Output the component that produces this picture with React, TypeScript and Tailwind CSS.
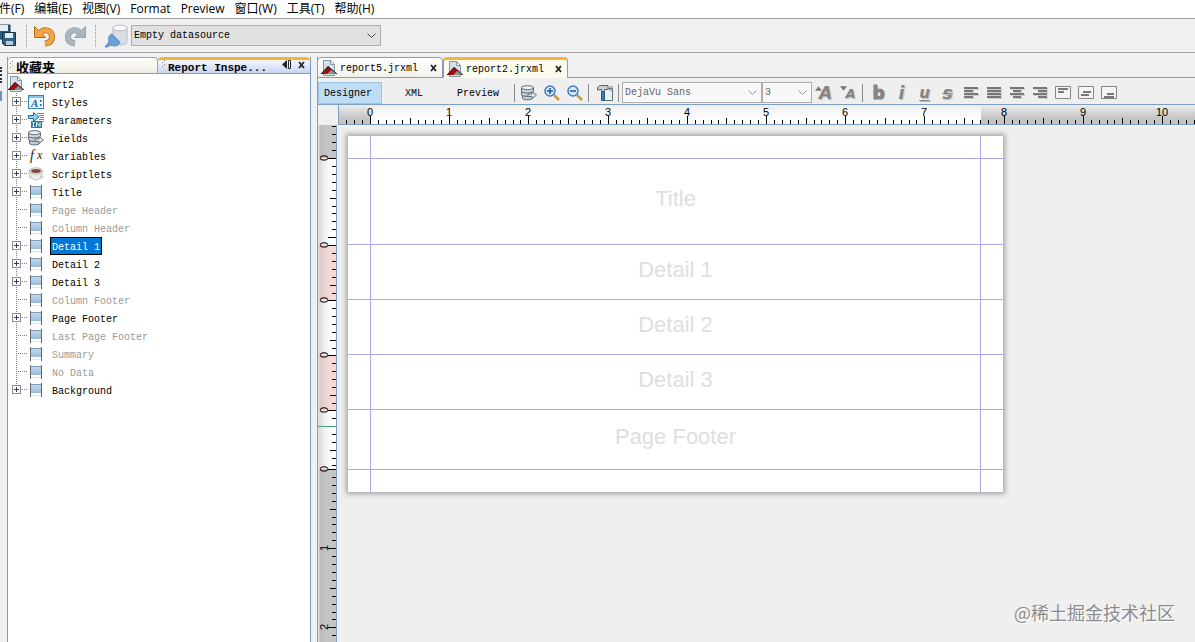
import { ReactNode } from 'react'
import { clsx } from 'clsx'

const MONO = "font-['Liberation_Mono','Noto_Sans_CJK_SC',monospace] text-[10px]"
const UI = "font-['Open_Sans','Noto_Sans_CJK_SC',sans-serif] text-[12px]"

const UNIT = 79.2
const MINOR = UNIT / 10

const menus = ['件(F)', '编辑(E)', '视图(V)', 'Format', 'Preview', '窗口(W)', '工具(T)', '帮助(H)']

interface IconProps {
  size?: number
  children: ReactNode
}

function Icon({ size = 16, children }: IconProps) {
  return (
    <svg width={size} height={size} viewBox="0 0 16 16" className="shrink-0" aria-hidden="true">
      {children}
    </svg>
  )
}

function ReportIcon() {
  return (
    <Icon>
      <path d="M2.500.5h7l4 4v11h-11z" fill="#d5e1eb" stroke="#8494a2" />
      <path d="M9.500.5v4h4z" fill="#fff" stroke="#8494a2" />
      <path d="M0 14 7 6l4 3.500-4.500 4.500z" fill="#a30b0b" />
      <path d="M6.500 14l4.500-5 5 5z" fill="#8c8c8c" />
      <path d="M0 14 7 6.500 16 14" fill="none" stroke="#222" />
    </Icon>
  )
}

function StylesIcon() {
  return (
    <Icon>
      <rect x=".5" y="1.500" width="15" height="13" fill="#eaf5fc" stroke="#2f86bd" />
      <path d="M1 2h14v2H1z" fill="#8cc3e6" />
      <text x="3" y="13" fontSize="11" fontStyle="italic" fontWeight="bold" fontFamily="Liberation Serif, serif" fill="#1c6ea8">A</text>
      <path d="M12 6h1.500v2H12zM12 10h1.500v2H12z" fill="#1c6ea8" />
    </Icon>
  )
}

function ParametersIcon() {
  return (
    <Icon>
      <path d="M9 1.500h7M11 3.500h5M12 5.500h4M11 7.500h5M12 9.500h4" stroke="#7b8a96" />
      <path d="M.5 3.500h5v-3L11 5 5.500 9.500v-3h-5z" fill="#8fd0ee" stroke="#1d6f9c" />
      <rect x="3" y="9" width="11" height="7" fill="#1c7fb0" />
      <path d="M4.500 10.500h2M5.500 10.500v4M4.500 14.500h2M8.500 15v-4.500l3.500 4V10" fill="none" stroke="#fff" />
    </Icon>
  )
}

function FieldsIcon() {
  return (
    <Icon>
      <path d="M1.500 10v3c0 2.500 10 2.500 10 0v-3" fill="#c3cdd5" stroke="#5b6975" />
      <path d="M.5 6.500v3c0 2.500 11 2.500 11 0v-3" fill="#c3cdd5" stroke="#5b6975" />
      <path d="M.5 3v3c0 2.500 12 2.500 12 0V3" fill="#d2dae0" stroke="#5b6975" />
      <ellipse cx="6.500" cy="2.700" rx="6" ry="2" fill="#eef2f5" stroke="#5b6975" />
      <path d="M7 9h4V6.500L15.500 10 11 13.500v-2H7z" fill="#dbe3e9" stroke="#66727d" />
    </Icon>
  )
}

function VariablesIcon() {
  return (
    <Icon>
      <text x="2" y="12" fontSize="14" fontStyle="italic" fontFamily="Liberation Serif, serif" fill="#222">f</text>
      <text x="9" y="11" fontSize="12" fontStyle="italic" fontFamily="Liberation Serif, serif" fill="#222">x</text>
    </Icon>
  )
}

function ScriptletsIcon() {
  return (
    <Icon>
      <ellipse cx="8" cy="11" rx="7.500" ry="2.500" fill="#d8d4d0" />
      <path d="M1 5c0 5 3 9 7 9s6-4 6.500-9z" fill="#ececea" stroke="#b5aeaa" strokeWidth=".7" />
      <ellipse cx="8" cy="5" rx="7" ry="3.200" fill="#f2efec" stroke="#a79f99" strokeWidth=".7" />
      <ellipse cx="8" cy="5" rx="5" ry="1.900" fill="#7b4a35" />
    </Icon>
  )
}

function BandIcon() {
  return (
    <Icon>
      <defs>
        <linearGradient id="band" x1="0" y1="0" x2="0" y2="1">
          <stop offset="0" stopColor="#c5dbef" />
          <stop offset="1" stopColor="#98bcde" />
        </linearGradient>
      </defs>
      <rect x="3" y="2" width="10" height="9" fill="url(#band)" />
      <path d="M2.500 1v14M13.500 1v14" stroke="#5d6874" />
      <path d="M3 2.500h10" stroke="#7f98b0" />
      <path d="M3 13.500h10" stroke="#e2e6ea" />
    </Icon>
  )
}

function SaveAllIcon() {
  return (
    <svg width="20" height="24" viewBox="0 0 20 24" className="-ml-1 shrink-0" aria-hidden="true">
      <path d="M0 1h14v14H0z" fill="#2c5a7d" stroke="#173a55" />
      <path d="M4 1h8v6H4z" fill="#e4eef5" />
      <path d="M6.500 8.500h13v13h-11l-2-2z" fill="#2f6288" stroke="#12344d" />
      <path d="M9 9h8v5H9z" fill="#dfeaf2" />
      <path d="M10 17h7v4h-7z" fill="#b8cad8" />
    </svg>
  )
}

function UndoIcon({ redo = false }: { redo?: boolean }) {
  const fill = redo ? '#a9b6bf' : '#f2a545'
  const edge = redo ? '#93a4b0' : '#b86a12'
  const arc = 'M7 9c4-5 12-3 12 4 0 4-3 6-7 6.500'
  return (
    <svg width="24" height="24" viewBox="0 0 24 24" className={clsx('shrink-0', redo && '-scale-x-100')} aria-hidden="true">
      <path d={arc} fill="none" stroke={edge} strokeWidth="6" />
      <path d="M1.500 2.500v11h11z" fill={fill} stroke={edge} strokeLinejoin="round" />
      <path d={arc} fill="none" stroke={fill} strokeWidth="4.500" />
    </svg>
  )
}

function DatasourceIcon() {
  return (
    <svg width="24" height="24" viewBox="0 0 24 24" className="shrink-0" aria-hidden="true">
      <path d="M9 4v14c0 4 14 4 14 0V4z" fill="#dcdde2" stroke="#b9bbc3" />
      <ellipse cx="16" cy="4" rx="7" ry="2.800" fill="#fafafc" stroke="#b9bbc3" />
      <path d="M1 23l4-5c-1-4 0-7 3-8l8 8c-1 4-5 5-9 3l-4 2z" fill="#6c9fd4" stroke="#5c8cc0" />
    </svg>
  )
}

function Zoomer({ plus = false }: { plus?: boolean }) {
  return (
    <Icon>
      <path d="M10 10l5 5" stroke="#c99a3c" strokeWidth="2.500" />
      <circle cx="6" cy="6" r="5" fill="#d6e9fb" stroke="#3f7ec6" strokeWidth="1.500" />
      <path d={plus ? 'M3 6h6M6 3v6' : 'M3 6h6'} stroke="#1d56a8" strokeWidth="1.500" />
    </Icon>
  )
}

function HammerIcon() {
  return (
    <Icon>
      <path d="M7.500 3.500h8v12h-8z" fill="#edf1f4" stroke="#5f6b75" />
      <path d="M13 1v5M15 1v5" stroke="#77828b" />
      <path d="M.5 5V2.500L3 .5h8v4H7.500v2h-3v-2z" fill="#c8d0d6" stroke="#59656f" />
      <path d="M4.500 6.500h3v9h-3z" fill="#3e7ea9" stroke="#255b80" />
    </Icon>
  )
}

interface Node {
  label: string
  icon?: ReactNode
  open?: boolean
  muted?: boolean
  selected?: boolean
}

const nodes: Node[] = [
  { label: 'Styles', icon: <StylesIcon />, open: true },
  { label: 'Parameters', icon: <ParametersIcon />, open: true },
  { label: 'Fields', icon: <FieldsIcon />, open: true },
  { label: 'Variables', icon: <VariablesIcon />, open: true },
  { label: 'Scriptlets', icon: <ScriptletsIcon />, open: true },
  { label: 'Title', open: true },
  { label: 'Page Header', muted: true },
  { label: 'Column Header', muted: true },
  { label: 'Detail 1', open: true, selected: true },
  { label: 'Detail 2', open: true },
  { label: 'Detail 3', open: true },
  { label: 'Column Footer', muted: true },
  { label: 'Page Footer', open: true },
  { label: 'Last Page Footer', muted: true },
  { label: 'Summary', muted: true },
  { label: 'No Data', muted: true },
  { label: 'Background', open: true }
]

function Branch({ expandable, last }: { expandable?: boolean; last: boolean }) {
  return (
    <svg width="16" height="18" viewBox="0 0 16 18" shapeRendering="crispEdges" aria-hidden="true">
      <path d={last ? 'M4.500 0v8' : 'M4.500 0v18'} stroke="#808080" strokeDasharray="1 1" />
      <path d="M4 8.500h11" stroke="#808080" strokeDasharray="1 1" />
      {expandable && (
        <>
          <rect x=".5" y="4.500" width="8" height="8" rx="1" fill="#fff" stroke="#8c8c8c" />
          <path d="M2 8.500h5M4.500 6v5" stroke="#3a3a5a" />
        </>
      )}
    </svg>
  )
}

function Tree() {
  return (
    <div className={clsx(MONO, 'min-h-0 flex-1 overflow-hidden bg-white pt-px')}>
      <div className="flex h-[18px] items-center gap-2">
        <ReportIcon />
        <span className="pt-0.5">report2</span>
      </div>
      <ul className="pl-1">
        {nodes.map((node, i) => (
          <li key={node.label} className="flex h-[18px] items-center">
            {node.open ? (
              <button type="button" aria-label={`Expand ${node.label}`}>
                <Branch expandable last={i === nodes.length - 1} />
              </button>
            ) : (
              <Branch last={i === nodes.length - 1} />
            )}
            {node.icon ?? <BandIcon />}
            <button
              type="button"
              className={clsx(
                'ml-1.5 h-[18px] border px-px pt-0.5 whitespace-nowrap',
                node.selected ? 'border-black bg-[#0078d7] text-white' : 'border-transparent',
                node.muted && 'text-[#999]'
              )}
            >
              {node.label}
            </button>
          </li>
        ))}
      </ul>
    </div>
  )
}

function Grip() {
  return (
    <svg width="4" height="8" viewBox="0 0 4 8" className="shrink-0" shapeRendering="crispEdges" aria-hidden="true">
      <path d="M2 0h1v1H2zM0 2h1v1H0zM2 4h1v1H2zM0 6h1v1H0z" fill="#777" />
    </svg>
  )
}

function CloseIcon() {
  return (
    <svg width="8" height="8" viewBox="0 0 8 8" aria-hidden="true">
      <path d="M1 1l5 6M6 1L1 7" stroke="#222" strokeWidth="1.800" />
    </svg>
  )
}

function Inspector() {
  return (
    <aside className="flex w-[304px] shrink-0 flex-col border-x border-[#7a9ac4]">
      <div className="flex h-[17px] shrink-0 border-b border-[#7f9fc0] font-['Liberation_Mono','Noto_Sans_CJK_SC',monospace] text-[11px] font-bold">
        <button type="button" className="flex w-[150px] items-start gap-0.5 overflow-hidden rounded-t border-t border-r border-[#8faac4] bg-linear-to-b from-white to-[#efece2] pt-[3px] pl-0.5 text-[13px] leading-4">
          <Grip />
          收藏夹
        </button>
        <div className="flex min-w-0 flex-1 overflow-hidden rounded-t border-t-[3px] border-[#f6b23b] bg-linear-to-b from-[#f6f7fd] to-[#c8d5f2] pr-1 pl-1">
          <button type="button" className="flex flex-1 items-start gap-0.5 leading-4">
            <Grip />
            Report Inspe...
          </button>
          <button type="button" aria-label="Minimize" className="mr-1.5 flex h-[9px] w-[10px] items-center">
            <svg width="10" height="9" viewBox="0 0 10 9" aria-hidden="true">
              <path d="M5 0v9L0 4.500z" fill="#222" />
              <path d="M6.500.5h2v8h-2z" fill="#fff" stroke="#222" />
            </svg>
          </button>
          <button type="button" aria-label="Close inspector" className="flex h-[9px] items-center">
            <CloseIcon />
          </button>
        </div>
      </div>
      <Tree />
    </aside>
  )
}

function EditorTab({ name, active }: { name: string; active?: boolean }) {
  return (
    <div
      className={clsx(
        'flex items-center rounded-t border-x border-[#7f9fc0] pr-1 pl-[3px]',
        active
          ? 'w-[125px] border-t-[3px] border-t-[#f6b23b] bg-[#fdfaef] pb-px'
          : '-ml-px w-[126px] border-t border-b bg-linear-to-b from-white to-[#f3f1ea]'
      )}
    >
      <ReportIcon />
      <button type="button" className="flex-1 pt-0.5 pl-[3px] text-left">{name}</button>
      <button type="button" aria-label={`Close ${name}`}>
        <CloseIcon />
      </button>
    </div>
  )
}

function Dropdown({ label, value, className, disabled }: { label: string; value: string; className: string; disabled?: boolean }) {
  return (
    <span className={clsx('relative flex shrink-0 items-center', className)}>
      <select
        aria-label={label}
        disabled={disabled}
        className={clsx(
          MONO,
          'h-full w-full appearance-none border border-[#adadad] pl-0.5',
          disabled ? 'bg-[#f8f8f8] text-[#666] opacity-100' : 'bg-[#e1e1e1] text-black'
        )}
      >
        <option>{value}</option>
      </select>
      <svg width="9" height="6" viewBox="0 0 9 6" className="pointer-events-none absolute right-[5px]" aria-hidden="true">
        <path d="M.5.5l4 4 4-4" fill="none" stroke={disabled ? '#999' : '#444'} />
      </svg>
    </span>
  )
}

function Tool({ label, children }: { label: string; children: ReactNode }) {
  return (
    <button type="button" aria-label={label} className="flex h-5 w-[23px] shrink-0 items-center justify-center">
      {children}
    </button>
  )
}

function Divider() {
  return <span className="mx-0.5 h-[18px] w-px shrink-0 bg-[#8a8a8a]" />
}

const glyph = "font-['DejaVu_Sans',sans-serif] font-bold leading-5 text-[#858585] [text-shadow:1px_1px_1px_#bbb]"

const lines = [
  { label: 'Align left', d: 'M1 3h14M1 6h9M1 9h14M1 12h9' },
  { label: 'Justify', d: 'M1 3h14M1 6h14M1 9h14M1 12h14' },
  { label: 'Align center', d: 'M1 3h14M4 6h8M1 9h14M4 12h8' },
  { label: 'Align right', d: 'M1 3h14M6 6h9M1 9h14M6 12h9' }
]

const boxes = [
  { label: 'Align top', d: 'M3 4h10M3 7h6' },
  { label: 'Align middle', d: 'M5 7h8M3 10h8' },
  { label: 'Align bottom', d: 'M6 9h7M3 12h10' }
]

function DesignerBar() {
  return (
    <div className="flex h-[27px] shrink-0 items-center overflow-hidden border-b border-[#7f9fc0] bg-[#efefef] pt-[3px]">
      <button type="button" className="h-[22px] w-16 shrink-0 border border-[#99c4e8] bg-[#bfdcf5] pt-0.5 pr-1">Designer</button>
      <button type="button" className="h-[22px] w-16 shrink-0 pt-0.5">XML</button>
      <button type="button" className="h-[22px] w-16 shrink-0 pt-0.5">Preview</button>
      <span className="w-0.5 shrink-0" />
      <Divider />
      <Tool label="Dataset query"><FieldsIcon /></Tool>
      <Tool label="Zoom in"><Zoomer plus /></Tool>
      <Tool label="Zoom out"><Zoomer /></Tool>
      <Divider />
      <span className="w-0.5 shrink-0" />
      <Tool label="Format tools"><HammerIcon /></Tool>
      <Divider />
      <span className="w-px shrink-0" />
      <Dropdown label="Font" value="DejaVu Sans" className="h-[21px] w-[140px]" disabled />
      <Dropdown label="Font size" value="3" className="h-[21px] w-[50px]" disabled />
      <span className="w-0.5 shrink-0" />
      <Tool label="Increase font">
        <span className={clsx(glyph, 'text-[17px] italic')}>A</span>
        <svg width="7" height="5" viewBox="0 0 6 4" className="absolute mr-3.5 mb-2" aria-hidden="true">
          <path d="M0 4l3-4 3 4z" fill="#777" />
        </svg>
      </Tool>
      <Tool label="Decrease font">
        <span className={clsx(glyph, 'pt-0.5 pl-1 text-[13px] italic')}>A</span>
        <svg width="7" height="5" viewBox="0 0 6 4" className="absolute mr-2.5 mb-2" aria-hidden="true">
          <path d="M0 0l3 4 3-4z" fill="#777" />
        </svg>
      </Tool>
      <Divider />
      <span className="w-0.5 shrink-0" />
      <Tool label="Bold"><span className={clsx(glyph, 'text-[17px] [-webkit-text-stroke:1px_#858585]')}>b</span></Tool>
      <Tool label="Italic"><span className={clsx(glyph, 'text-[17px] italic')}>i</span></Tool>
      <Tool label="Underline"><span className={clsx(glyph, 'text-[15px] italic underline underline-offset-2')}>u</span></Tool>
      <Tool label="Strikethrough"><span className={clsx(glyph, 'text-[17px] italic line-through')}>s</span></Tool>
      {lines.map((item) => (
        <Tool key={item.label} label={item.label}>
          <Icon>
            <path d={item.d} transform="translate(1 1)" stroke="#c4c4c4" strokeWidth="1.500" />
            <path d={item.d} stroke="#777" strokeWidth="2" />
          </Icon>
        </Tool>
      ))}
      {boxes.map((item) => (
        <Tool key={item.label} label={item.label}>
          <Icon>
            <path d="M.5 1.500h15v12H.5z" fill="#f4f4f4" stroke="#858585" />
            <path d={item.d} stroke="#777" strokeWidth="2" />
          </Icon>
        </Tool>
      ))}
    </div>
  )
}

const tickText = { fontSize: 11, fontFamily: 'Liberation Sans, sans-serif', textAnchor: 'middle' as const }

const inches = [0, 1, 2, 3, 4, 5, 6, 7, 8, 9, 10]

function HorizontalRuler() {
  const origin = 31
  const ticks = Array.from({ length: 260 }, (_, i) => i - 3)
  return (
    <svg width="100%" height="19" className="min-w-0 flex-1" aria-label="Horizontal ruler">
      <defs>
        <linearGradient id="shade-h" x1="0" y1="0" x2="0" y2="1">
          <stop offset="0" stopColor="#eee" />
          <stop offset=".4" stopColor="#eee" stopOpacity=".4" />
          <stop offset=".7" stopColor="#eee" stopOpacity="0" />
        </linearGradient>
      </defs>
      <rect width="100%" height="19" fill="#c4c4c4" />
      <rect x={origin} width="611" height="19" fill="#fff" />
      <rect width="100%" height="19" fill="url(#shade-h)" />
      <g shapeRendering="crispEdges" stroke="#000">
        {ticks.map((n) => {
          const x = Math.round(origin + n * MINOR) + 0.5
          return <line key={n} x1={x} x2={x} y1={n % 10 === 0 ? 11 : n % 5 === 0 ? 13 : 15} y2="19" />
        })}
      </g>
      {inches.map((n) => (
        <text key={n} x={Math.round(origin + n * UNIT)} y="11" {...tickText}>{n}</text>
      ))}
    </svg>
  )
}

const sections = [
  { top: 33, height: 87, fill: '#fff', marks: [0] },
  { top: 120, height: 55, fill: '#f8d9d9', marks: [0] },
  { top: 175, height: 55, fill: '#fff', marks: [0] },
  { top: 230, height: 55, fill: '#f8d9d9', marks: [0] },
  { top: 285, height: 59, fill: '#fff', marks: [0] },
  { top: 344, height: 1600, fill: '#c4c4c4', marks: [0, 1, 2] }
]

function VerticalRuler() {
  return (
    <svg width="19" height="100%" className="shrink-0 border-r border-[#7f9fc0]" aria-label="Vertical ruler">
      <defs>
        <linearGradient id="shade-v">
          <stop offset="0" stopColor="#e8e8e8" />
          <stop offset=".2" stopColor="#aaa" stopOpacity=".3" />
          <stop offset=".8" stopColor="#ddd" stopOpacity="0" />
        </linearGradient>
      </defs>
      <rect width="18" height="33" fill="#c4c4c4" />
      {sections.map((s) => (
        <rect key={s.top} y={s.top} width="18" height={s.height} fill={s.fill} />
      ))}
      <rect width="18" height="100%" fill="url(#shade-v)" />
      <g shapeRendering="crispEdges" stroke="#000">
        {[1, 9, 17, 25].map((y) => (
          <line key={y} x1="14" x2="18" y1={y + 0.5} y2={y + 0.5} />
        ))}
        {sections.map((s) =>
          Array.from({ length: Math.ceil(s.height / MINOR) }, (_, n) => {
            const y = Math.round(s.top + n * MINOR) + 0.5
            return <line key={`${s.top}-${n}`} x1={n % 10 === 0 ? 10 : n % 5 === 0 ? 12 : 14} x2="18" y1={y} y2={y} />
          })
        )}
      </g>
      <path d="M0 301.500h18" stroke="#4b9a86" />
      {sections.map((s) =>
        s.marks.map((n) => (
          <text key={`${s.top}-${n}`} transform={`translate(10 ${Math.round(s.top + n * UNIT)}) rotate(-90)`} {...tickText}>{n}</text>
        ))
      )}
    </svg>
  )
}

const bands = [
  { label: '', height: 'h-[23px]' },
  { label: 'Title', height: 'h-[86px]' },
  { label: 'Detail 1', height: 'h-[55px]' },
  { label: 'Detail 2', height: 'h-[55px]' },
  { label: 'Detail 3', height: 'h-[55px]' },
  { label: 'Page Footer', height: 'h-[60px]' },
  { label: '', height: 'h-[22px]' }
]

function Canvas() {
  return (
    <div className="min-w-0 flex-1 overflow-hidden bg-[#efefef] p-[11px]">
      <div className="w-[655px] bg-white font-['Liberation_Sans',sans-serif] text-[22px] text-[#dedede] shadow-[0_0_5px_2px_#a4a4a4]">
        {bands.map((band, i) => (
          <div key={i} className={clsx('flex border-[#aaaae6]', band.height, i < bands.length - 1 && 'border-b')}>
            <span className="w-[23px] border-r border-[#aaaae6]" />
            <span className="flex flex-1 items-center justify-center pb-1.5">{band.label}</span>
            <span className="w-[23px] border-l border-[#aaaae6]" />
          </div>
        ))}
      </div>
    </div>
  )
}

function Editor() {
  return (
    <main className={clsx(MONO, 'flex min-w-0 flex-1 flex-col border-l border-[#7f9fc0]')}>
      <div className="flex h-[21px] shrink-0">
        <EditorTab name="report5.jrxml" />
        <EditorTab name="report2.jrxml" active />
        <span className="flex-1 border-b border-[#7f9fc0]" />
      </div>
      <DesignerBar />
      <div className="flex shrink-0">
        <span className="w-5 shrink-0 bg-[#f0f0f0]" />
        <div className="flex min-w-0 flex-1 border-b border-l border-[#7f9fc0]">
          <HorizontalRuler />
        </div>
      </div>
      <div className="flex min-h-0 flex-1">
        <VerticalRuler />
        <Canvas />
      </div>
    </main>
  )
}

export default function App() {
  return (
    <div className="relative flex h-screen flex-col overflow-hidden bg-[#f0f0f0] text-black">
      <nav className={clsx(UI, 'flex h-[19px] shrink-0 gap-2.5 border-b border-[#a0a0a0] bg-white leading-[18px]')}>
        {menus.map((menu) => (
          <button key={menu} type="button" className="shrink-0 whitespace-nowrap first:-ml-px">{menu}</button>
        ))}
      </nav>
      <div className="flex h-[34px] shrink-0 items-center border-b border-[#a0a0a0]">
        <button type="button" aria-label="Save all"><SaveAllIcon /></button>
        <span className="mx-2.5 h-[22px] border-l border-dotted border-[#999]" />
        <button type="button" aria-label="Undo" className="-ml-1"><UndoIcon /></button>
        <button type="button" aria-label="Redo" className="ml-1.5"><UndoIcon redo /></button>
        <span className="mx-2 h-[22px] border-l border-dotted border-[#999]" />
        <DatasourceIcon />
        <Dropdown label="Datasource" value="Empty datasource" className="ml-[3px] h-[21px] w-[250px]" />
      </div>
      <div className="flex min-h-0 flex-1 gap-[6px] bg-[#eef0f2] pt-1">
        <div className="flex w-px shrink-0 flex-col gap-2 pt-2.5">
          <span className="h-4 border-l-2 border-dotted border-[#333]" />
          <span className="h-2.5 border-l-2 border-[#6c8fb5]" />
        </div>
        <Inspector />
        <Editor />
      </div>
      <p className="pointer-events-none absolute right-5 bottom-4 font-['Noto_Sans_CJK_SC',sans-serif] text-[18px] text-[#8b8b8b] [text-shadow:1px_1px_0_#fff]">
        @稀土掘金技术社区
      </p>
    </div>
  )
}
